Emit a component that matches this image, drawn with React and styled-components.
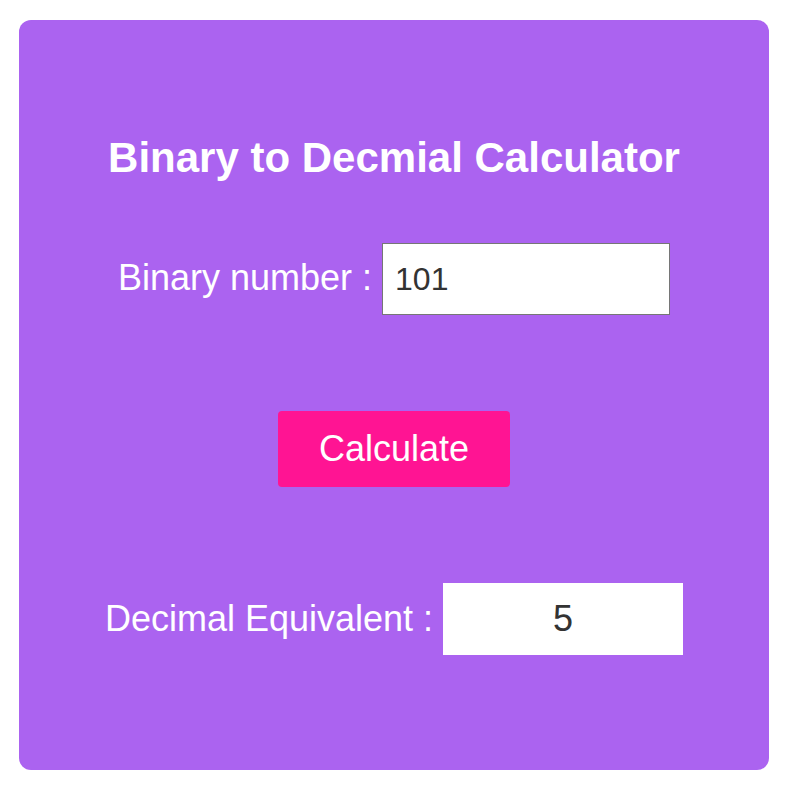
import React, { useState } from "react";
import styled, { createGlobalStyle } from "styled-components";

const GlobalStyle = createGlobalStyle`
  html, body {
    margin: 0;
    padding: 0;
    background: #ffffff;
    font-family: "Liberation Sans", Arial, sans-serif;
  }
`;

const Page = styled.div`
  padding: 20px 16px 18px 19px;
`;

const Card = styled.div`
  width: 750px;
  height: 750px;
  box-sizing: border-box;
  background: #ab63f0;
  border-radius: 12px;
  padding-top: 114px;
  display: flex;
  flex-direction: column;
  align-items: center;
  color: #ffffff;
`;

const Title = styled.h1`
  margin: 0;
  font-size: 42px;
  line-height: 48px;
  font-weight: 700;
  color: #ffffff;
`;

const Row = styled.div`
  display: flex;
  align-items: baseline;
  gap: 10px;
  margin-top: ${(p) => p.$top}px;
`;

const Label = styled.label`
  font-size: 36px;
  color: #ffffff;
`;

const Field = styled.input`
  box-sizing: border-box;
  width: ${(p) => p.$width}px;
  height: 72px;
  margin: 0;
  padding: 0 12px;
  font-family: "Liberation Sans", Arial, sans-serif;
  font-size: ${(p) => p.$size}px;
  color: #333333;
  background: #ffffff;
  border: ${(p) => (p.$bordered ? "1px solid #767676" : "none")};
  border-radius: 0;
  text-align: ${(p) => p.$align};
  outline: none;
`;

const Button = styled.button`
  margin-top: 96px;
  width: 232px;
  height: 76px;
  border: none;
  border-radius: 4px;
  background: #ff1493;
  color: #ffffff;
  font-family: "Liberation Sans", Arial, sans-serif;
  font-size: 36px;
  cursor: pointer;
`;

export default function App() {
  const [binary, setBinary] = useState("101");
  const [decimal, setDecimal] = useState("5");
  const calc = () => {
    const v = parseInt(binary, 2);
    setDecimal(isNaN(v) ? "" : String(v));
  };
  return (
    <>
      <GlobalStyle />
      <Page>
        <Card>
          <Title>Binary to Decmial Calculator</Title>
          <Row $top={61}>
            <Label>Binary number :</Label>
            <Field
              $width={288}
              $size={32}
              $bordered
              $align="left"
              value={binary}
              onChange={(e) => setBinary(e.target.value)}
            />
          </Row>
          <Button onClick={calc}>Calculate</Button>
          <Row $top={96}>
            <Label>Decimal Equivalent :</Label>
            <Field $width={240} $size={36} $align="center" value={decimal} readOnly />
          </Row>
        </Card>
      </Page>
    </>
  );
}
